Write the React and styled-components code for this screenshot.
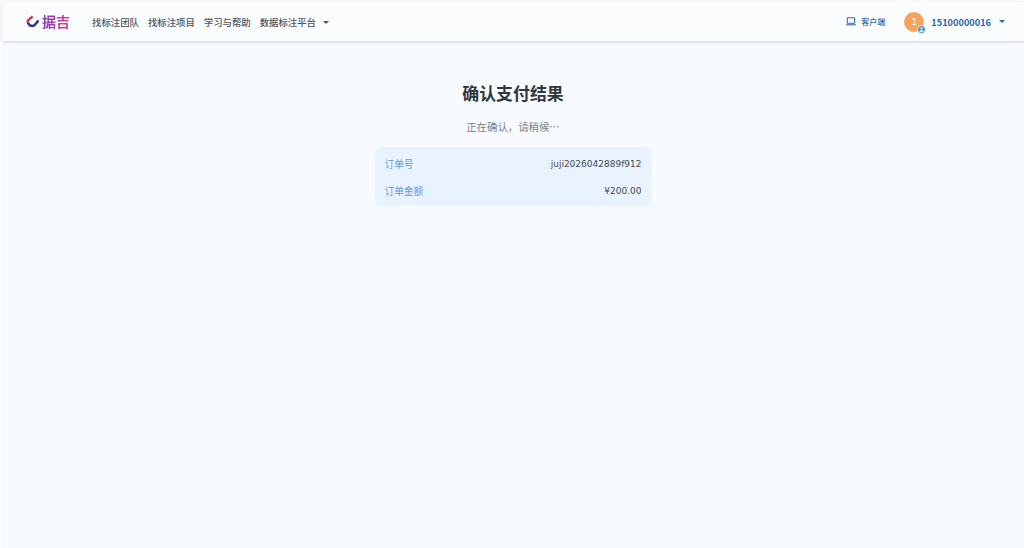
import React from "react";
import styled, { createGlobalStyle } from "styled-components";

const fontStack = `"DejaVu Sans", "Noto Sans CJK SC", sans-serif`;

const GlobalStyle = createGlobalStyle`
  html, body {
    margin: 0;
    height: 100%;
    background: #f8fbff;
    font-family: ${fontStack};
  }
  #root {
    height: 100%;
  }
  * {
    box-sizing: border-box;
  }
`;

const Page = styled.div`
  height: 548px;
  overflow: hidden;
  padding: 2px 0 0 2px;
  background: #fdfeff;
`;

const Shell = styled.div`
  height: 100%;
  display: flex;
  flex-direction: column;
  background: #f7faff;
`;

const Header = styled.header`
  height: 39px;
  flex: none;
  display: flex;
  align-items: center;
  padding: 0 19px 0 24px;
  background: #fbfcfe;
  box-shadow: 0 1px 3px rgba(60, 70, 90, 0.22);
`;

const Logo = styled.div`
  display: flex;
  align-items: center;
  gap: 3px;
  width: 66px;
`;

const LogoText = styled.span`
  font-size: 14px;
  font-weight: 700;
  line-height: 1;
  background: linear-gradient(90deg, #7a3db4, #e0409a);
  -webkit-background-clip: text;
  background-clip: text;
  color: transparent;
`;

const Nav = styled.nav`
  display: flex;
  align-items: center;
  gap: 9px;
  padding-top: 1px;
`;

const NavItem = styled.a`
  display: flex;
  align-items: center;
  gap: 7px;
  font-size: 9.4px;
  font-weight: 500;
  color: #50555c;
  white-space: nowrap;
`;

const Caret = styled.span`
  width: 0;
  height: 0;
  border-left: 3px solid transparent;
  border-right: 3px solid transparent;
  border-top: 3px solid ${({ $color }) => $color};
`;

const RightArea = styled.div`
  margin-left: auto;
  display: flex;
  align-items: center;
`;

const ClientLink = styled.a`
  display: flex;
  align-items: center;
  gap: 5px;
  margin-right: 19px;
  font-size: 8px;
  font-weight: 500;
  color: #2f6fb3;
  white-space: nowrap;
`;

const Avatar = styled.div`
  position: relative;
  width: 20px;
  height: 20px;
  border-radius: 50%;
  margin-right: 7px;
  display: flex;
  align-items: center;
  justify-content: center;
  background: #f4a45c;
  color: #fdf1e4;
  font-size: 9.5px;
`;

const AvatarBadge = styled.span`
  position: absolute;
  right: -2px;
  bottom: -2px;
  width: 9px;
  height: 9px;
  border-radius: 50%;
  display: flex;
  align-items: center;
  justify-content: center;
  background: #4d96c8;
  border: 1px solid #dcebf7;
`;

const UserName = styled.span`
  font-family: "Noto Sans CJK SC", sans-serif;
  font-size: 9.2px;
  font-weight: 700;
  color: #2b66a8;
  margin-right: 8px;
`;

const Main = styled.main`
  flex: 1;
  display: flex;
  flex-direction: column;
  align-items: center;
  padding-top: 41px;
`;

const Title = styled.h1`
  margin: 0;
  font-size: 16.9px;
  line-height: 24px;
  font-weight: 700;
  color: #33363b;
`;

const Status = styled.p`
  margin: 13px 0 0;
  font-family: "Noto Sans CJK SC", sans-serif;
  font-size: 10.4px;
  line-height: 16px;
  color: #7d8288;
`;

const InfoCard = styled.section`
  width: 277px;
  margin-top: 12px;
  padding: 3px 10px 2px;
  border-radius: 7px;
  background: #e9f3ff;
`;

const InfoRow = styled.div`
  height: 27px;
  display: flex;
  align-items: center;
  justify-content: space-between;
`;

const InfoLabel = styled.span`
  font-size: 9.7px;
  color: #5b9be0;
`;

const InfoValue = styled.span`
  font-size: 9px;
  color: #45494f;
`;

const LogoMark = () => (
  <svg width="13" height="13" viewBox="0 0 13 13" fill="none" strokeWidth="2.5">
    <path d="M6.6 1.6 L2.8 4.6 Q1.2 6 2 7.6" stroke="#d0344f" />
    <path d="M2 7.6 Q3.2 11 6.4 11 Q8 11 9 9.8 L12.4 5.4" stroke="#35307f" />
  </svg>
);

const LaptopIcon = () => (
  <svg width="10" height="9" viewBox="0 0 10 9" fill="none" stroke="#2f6fb3" strokeWidth="1.1">
    <rect x="1.3" y="0.8" width="7.4" height="5.4" rx="0.5" />
    <path d="M0.2 7.8 H9.8" />
  </svg>
);

const BadgeIcon = () => (
  <svg width="5" height="5" viewBox="0 0 5 5" fill="#dcebf7">
    <circle cx="2.5" cy="1.4" r="1.1" />
    <path d="M0.5 5 Q0.5 3 2.5 3 Q4.5 3 4.5 5 Z" />
  </svg>
);

const navItems = ["找标注团队", "找标注项目", "学习与帮助"];

const App = () => (
  <>
    <GlobalStyle />
    <Page>
      <Shell>
        <Header>
          <Logo>
            <LogoMark />
            <LogoText>据吉</LogoText>
          </Logo>
          <Nav>
            {navItems.map((item) => (
              <NavItem key={item}>{item}</NavItem>
            ))}
            <NavItem>
              数据标注平台
              <Caret $color="#50555c" />
            </NavItem>
          </Nav>
          <RightArea>
            <ClientLink>
              <LaptopIcon />
              客户端
            </ClientLink>
            <Avatar>
              1
              <AvatarBadge>
                <BadgeIcon />
              </AvatarBadge>
            </Avatar>
            <UserName>15100000016</UserName>
            <Caret $color="#2b66a8" />
          </RightArea>
        </Header>
        <Main>
          <Title>确认支付结果</Title>
          <Status>{"正在确认\uFF0C请稍候\u2026"}</Status>
          <InfoCard>
            <InfoRow>
              <InfoLabel>订单号</InfoLabel>
              <InfoValue>juji2026042889f912</InfoValue>
            </InfoRow>
            <InfoRow>
              <InfoLabel>订单金额</InfoLabel>
              <InfoValue>¥200.00</InfoValue>
            </InfoRow>
          </InfoCard>
        </Main>
      </Shell>
    </Page>
  </>
);

export default App;
